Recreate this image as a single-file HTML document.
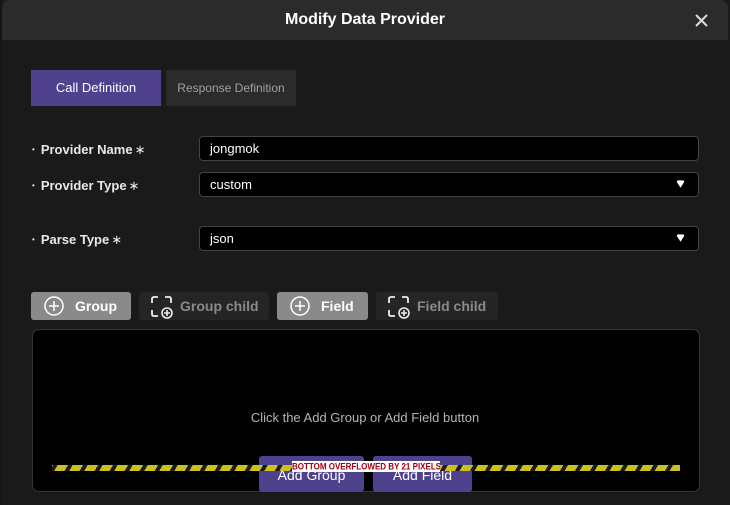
<!DOCTYPE html>
<html><head><meta charset="utf-8"><style>
*{box-sizing:border-box;margin:0;padding:0}
body{width:730px;height:505px;background:#1a1a1a;font-family:"Liberation Sans",sans-serif;position:relative;overflow:hidden;color:#fff}
.edge{position:absolute;left:0;top:0;width:2px;height:505px;background:#151515}
.hdr{position:absolute;left:2px;top:0;width:726px;height:40px;background:#2b2b2b;border-top-left-radius:8px;border-top-right-radius:8px}
.title{position:absolute;left:0;width:730px;top:11px;text-align:center;font-size:16px;font-weight:bold;color:#fff}
.abs{position:absolute}
.tab1{left:31px;top:70px;width:130px;height:36px;background:#4f418e;font-size:13px;line-height:36px;text-align:center;color:#fff}
.tab2{left:166px;top:70px;width:130px;height:36px;background:#2b2b2b;font-size:12px;line-height:36px;text-align:center;color:#a0a0a0}
.lbl{left:32px;font-size:13px;font-weight:bold;color:#e8e8e8}
.lbl b{font-weight:normal;font-size:8px;vertical-align:2px;margin-right:6px}
.lbl i{font-style:normal;font-weight:normal;margin-left:2px}
.inp{left:199px;width:500px;height:25px;background:#000;border:1px solid #444;border-radius:4px;font-size:13px;color:#fff;padding-left:10px;line-height:23px}
.arr{position:absolute;right:13px;top:7px}
.tb{top:292px;height:28px;border-radius:3px;font-size:14px;font-weight:bold;line-height:28px}
.panel{left:32px;top:329px;width:668px;height:163px;background:#000;border:1px solid #353535;border-radius:7px}
.msg{left:0;width:730px;top:410px;text-align:center;font-size:13px;color:#b5b5b5}
.btn{top:456px;height:36px;background:#4f418e;border-radius:3px;font-size:14px;color:#fff;text-align:center;line-height:38px}
.stripe{left:52px;top:465px;width:628px;height:6px;background:repeating-linear-gradient(-60deg,#c9c21e 0 9px,#1a1a2a 9px 13px)}
.warn{left:292px;top:461px;width:148px;height:11px;background:#fff;color:#a00010;font-size:8px;font-weight:bold;line-height:11px;text-align:center;letter-spacing:0;white-space:nowrap;overflow:hidden}
.warn span{display:inline-block;transform:scaleY(1.15)}
</style></head><body>
<div class="edge"></div>
<div class="hdr"></div>
<div class="abs title">Modify Data Provider</div>
<svg class="abs" style="left:695px;top:14px" width="13" height="13" viewBox="0 0 13 13"><path d="M1 1L12 12M12 1L1 12" stroke="#ddd" stroke-width="2"/></svg>
<div class="abs tab1">Call Definition</div>
<div class="abs tab2">Response Definition</div>

<div class="abs lbl" style="top:142px"><b>•</b>Provider Name<i>∗</i></div>
<div class="abs inp" style="top:136px">jongmok</div>
<div class="abs lbl" style="top:178px"><b>•</b>Provider Type<i>∗</i></div>
<div class="abs inp" style="top:172px">custom<svg class="arr" width="9" height="9" viewBox="0 0 11 10"><path d="M1 2Q1 0 3 0H8Q10 0 10 2L5.5 9Z" fill="#fff"/></svg></div>
<div class="abs lbl" style="top:232px"><b>•</b>Parse Type<i>∗</i></div>
<div class="abs inp" style="top:226px">json<svg class="arr" width="9" height="9" viewBox="0 0 11 10"><path d="M1 2Q1 0 3 0H8Q10 0 10 2L5.5 9Z" fill="#fff"/></svg></div>

<div class="abs tb" style="left:31px;width:100px;background:#8a8a8a;color:#fff"><svg style="position:absolute;left:13px;top:4px" width="20" height="20" viewBox="0 0 20 20"><circle cx="10" cy="10" r="9" fill="none" stroke="#fff" stroke-width="1.5"/><path d="M10 5V15M5 10H15" stroke="#fff" stroke-width="1.5"/></svg><span style="position:absolute;left:44px">Group</span></div>
<div class="abs tb" style="left:139px;width:130px;background:#252525;color:#8a8a8a"><svg style="position:absolute;left:11px;top:3px" width="24" height="24" viewBox="0 0 24 24"><path d="M2 8V4Q2 2 4 2H8M15 2H19Q21 2 21 4V8M2 15V19Q2 21 4 21H8" fill="none" stroke="#eee" stroke-width="1.8"/><circle cx="17" cy="18" r="5" fill="none" stroke="#eee" stroke-width="1.6"/><path d="M17 15V21M14 18H20" stroke="#eee" stroke-width="1.6"/></svg><span style="position:absolute;left:41px">Group child</span></div>
<div class="abs tb" style="left:277px;width:91px;background:#8a8a8a;color:#fff"><svg style="position:absolute;left:13px;top:4px" width="20" height="20" viewBox="0 0 20 20"><circle cx="10" cy="10" r="9" fill="none" stroke="#fff" stroke-width="1.5"/><path d="M10 5V15M5 10H15" stroke="#fff" stroke-width="1.5"/></svg><span style="position:absolute;left:44px">Field</span></div>
<div class="abs tb" style="left:376px;width:122px;background:#252525;color:#8a8a8a"><svg style="position:absolute;left:11px;top:3px" width="24" height="24" viewBox="0 0 24 24"><path d="M2 8V4Q2 2 4 2H8M15 2H19Q21 2 21 4V8M2 15V19Q2 21 4 21H8" fill="none" stroke="#eee" stroke-width="1.8"/><circle cx="17" cy="18" r="5" fill="none" stroke="#eee" stroke-width="1.6"/><path d="M17 15V21M14 18H20" stroke="#eee" stroke-width="1.6"/></svg><span style="position:absolute;left:41px">Field child</span></div>

<div class="abs panel"></div>
<div class="abs msg">Click the Add Group or Add Field button</div>
<div class="abs btn" style="left:259px;width:105px">Add Group</div>
<div class="abs btn" style="left:373px;width:99px">Add Field</div>
<div class="abs stripe"></div>
<div class="abs warn"><span>BOTTOM OVERFLOWED BY 21 PIXELS</span></div>
</body></html>
